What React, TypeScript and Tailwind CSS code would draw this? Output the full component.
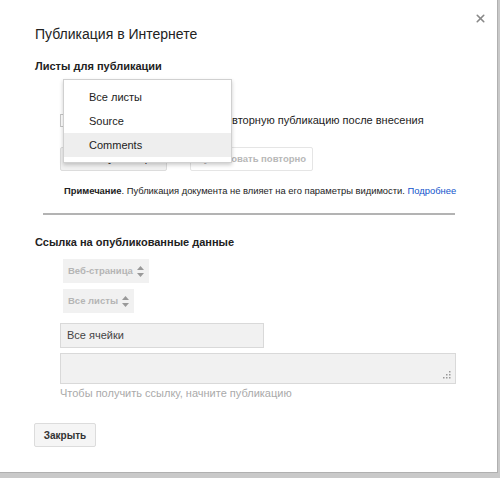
import { X } from 'lucide-react';

function Stepper() {
  return (
    <svg width="7" height="11" viewBox="0 0 7 11" className="ml-[4px]">
      <path d="M3.5 0 L7 4 L0 4 Z" fill="#999" />
      <path d="M3.5 11 L7 7 L0 7 Z" fill="#999" />
    </svg>
  );
}

export default function App() {
  return (
    <div className="w-[500px] h-[478px] bg-[#c9c9c9] font-['Liberation_Sans',Arial,sans-serif]">
      <div className="relative w-[498px] h-[473px] bg-white border-r border-b border-[#b0b0b0]">
        <X className="absolute left-[474px] top-[12px] w-[13px] h-[13px] text-[#888]" strokeWidth={3} />

        <div className="flex flex-col pl-[35px] pt-[24px]">
          <h1 className="text-[14px] leading-[20px] text-[#222]">Публикация в Интернете</h1>
          <h2 className="mt-[14px] text-[11px] leading-[16px] font-bold text-[#222]">Листы для публикации</h2>

          <div className="mt-[38px] ml-[25px] flex items-start text-[11px] leading-[16px] text-[#222]">
            <div className="w-[13px] h-[13px] mt-[2px] border border-[#c6c6c6] bg-white" />
            <div className="whitespace-nowrap">
              Автоматически возобновить повторную публикацию после внесения
              <br />
              изменений
            </div>
          </div>

          <div className="mt-[3px] ml-[25px] flex gap-[23px]">
            <button className="h-[24px] w-[107px] whitespace-nowrap bg-[#f1f1f1] border border-[#dcdcdc] rounded-[2px] text-[9.5px] font-bold text-[#444]">
              Начать публикацию
            </button>
            <button className="h-[24px] w-[123px] whitespace-nowrap bg-white border border-[#e5e5e5] rounded-[2px] text-[9.5px] font-bold text-[#b8b8b8]">
              Публиковать повторно
            </button>
          </div>

          <p className="mt-[13px] ml-[29px] whitespace-nowrap text-[9.4px] leading-[14px] text-[#222]">
            <span className="font-bold">Примечание</span>. Публикация документа не влияет на его параметры видимости.{' '}
            <span className="text-[#1155cc]">Подробнее</span>
          </p>

          <div className="mt-[15px] ml-[8px] w-[412px] h-[2px] bg-[#b3b3b3]" />

          <h2 className="mt-[19px] text-[11px] leading-[16px] font-bold text-[#222]">Ссылка на опубликованные данные</h2>

          <div className="mt-[9px] ml-[28px] self-start h-[24px] px-[5px] flex items-center bg-[#f1f1f1] text-[9.5px] font-bold text-[#b5b5b5]">
            Веб-страница
            <Stepper />
          </div>
          <div className="mt-[6px] ml-[28px] self-start h-[24px] px-[5px] flex items-center bg-[#f1f1f1] text-[9.5px] font-bold text-[#b5b5b5]">
            Все листы
            <Stepper />
          </div>

          <div className="mt-[10px] ml-[25px] w-[204px] h-[25px] px-[6px] flex items-center bg-[#f1f1f1] border border-[#d9d9d9] text-[11px] text-[#444]">
            Все ячейки
          </div>

          <div className="relative mt-[5px] ml-[25px] w-[396px] h-[31px] bg-[#f1f1f1] border border-[#d9d9d9]">
            <svg width="9" height="9" viewBox="0 0 9 9" className="absolute right-[4px] bottom-[4px]">
              <rect x="7" y="1" width="1.5" height="1.5" fill="#999" />
              <rect x="4" y="4" width="1.5" height="1.5" fill="#999" />
              <rect x="7" y="4" width="1.5" height="1.5" fill="#999" />
              <rect x="1" y="7" width="1.5" height="1.5" fill="#999" />
              <rect x="4" y="7" width="1.5" height="1.5" fill="#999" />
              <rect x="7" y="7" width="1.5" height="1.5" fill="#999" />
            </svg>
          </div>

          <p className="mt-[2px] ml-[25px] text-[11px] leading-[14px] text-[#aaa]">
            Чтобы получить ссылку, начните публикацию
          </p>

          <button className="mt-[23px] -ml-[1px] self-start w-[62px] h-[24px] bg-[#f5f5f5] border border-[#dcdcdc] rounded-[2px] text-[10px] font-bold text-[#333]">
            Закрыть
          </button>
        </div>

        <div className="absolute left-[63px] top-[79px] w-[169px] py-[5px] bg-white border border-[#d0d0d0] shadow-[0_2px_4px_rgba(0,0,0,0.2)] text-[11px] text-[#222]">
          <div className="h-[24px] pl-[25px] flex items-center">Все листы</div>
          <div className="h-[24px] pl-[25px] flex items-center">Source</div>
          <div className="h-[24px] pl-[25px] flex items-center bg-[#eeeeee]">Comments</div>
        </div>
      </div>
    </div>
  );
}
